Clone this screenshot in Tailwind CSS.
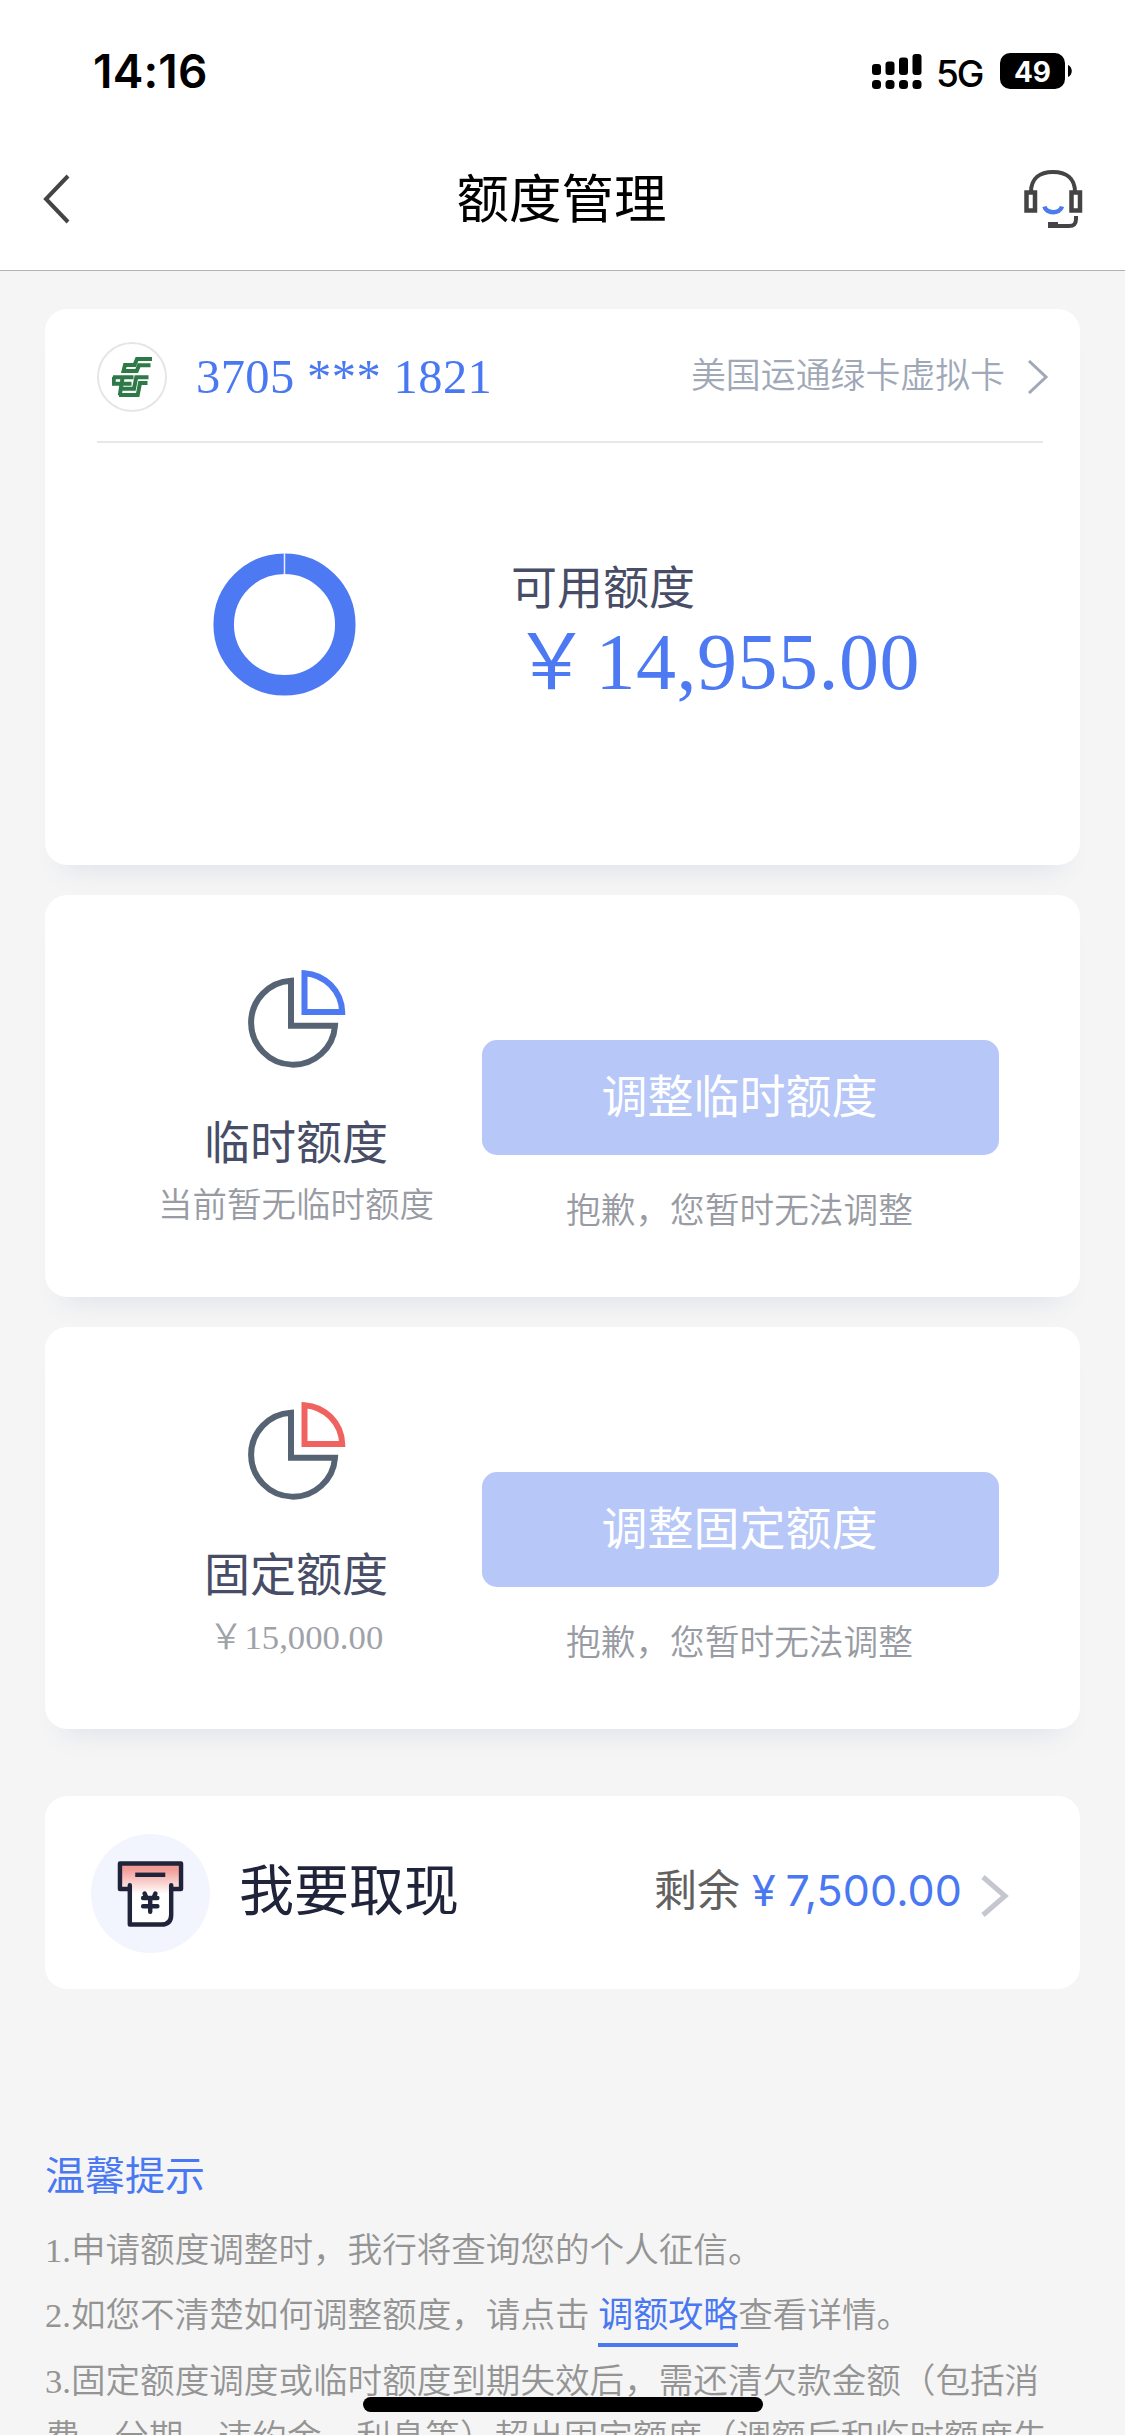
<!DOCTYPE html>
<html lang="zh-CN">
<head>
<meta charset="utf-8">
<title>额度管理</title>
<script src="https://cdn.jsdelivr.net/npm/@tailwindcss/browser@4"></script>
</head>
<body class="bg-[#f5f5f5]">
<div class="relative flex h-[2435px] w-[1125px] flex-col overflow-hidden bg-[#f5f5f5] font-['Liberation_Serif','Noto_Sans_CJK_SC',sans-serif]">
  <header class="flex h-[271px] shrink-0 flex-col border-b border-[#b2b2b2] bg-white font-['Inter','Noto_Sans_CJK_SC',sans-serif]">
    <div class="flex h-[142px] items-center justify-between pl-[93px] pr-[53px] text-black">
      <div class="text-[46px] leading-none font-semibold tracking-[0.2px]">14:16</div>
      <div class="flex items-center">
        <svg class="block" width="50" height="36" viewBox="0 0 50 36" fill="#000">
          <rect x="0" y="11" width="9" height="11" rx="3"/><rect x="13.5" y="8.500" width="9" height="13.500" rx="3"/><rect x="27" y="4.500" width="9" height="17.500" rx="3"/><rect x="40.500" y="1" width="9" height="21" rx="3"/>
          <rect x="0" y="27" width="9" height="9" rx="3.500"/><rect x="13.500" y="27" width="9" height="9" rx="3.500"/><rect x="27" y="27" width="9" height="9" rx="3.500"/><rect x="40.500" y="27" width="9" height="9" rx="3.500"/>
        </svg>
        <div class="ml-[14px] w-[64px] pt-1 text-[37px] leading-none font-medium tracking-[-2px]">5G</div>
        <div class="flex h-[36px] w-[65px] items-center justify-center rounded-[10px] bg-black pt-px text-[28px] leading-none font-bold text-white">49</div>
        <svg class="ml-[3px] block" width="4" height="12" viewBox="0 0 4 12"><path d="M0 0C5 2 5 10 0 12Z" fill="#000"/></svg>
      </div>
    </div>
    <div class="flex flex-1 items-start justify-between pl-[42px] pr-[42px] pt-[25px]">
      <svg class="mt-[7px] block" width="58" height="50" viewBox="0 0 58 50" fill="none"><path d="M26 2L4 25L26 48" stroke="#444" stroke-width="4"/></svg>
      <h1 class="text-[52.500px] leading-[64px] text-black">额度管理</h1>
      <svg class="mt-[2px] block" width="60" height="60" viewBox="0 0 60 60" fill="none" stroke="#444" stroke-width="4">
        <path d="M8 23C8 9 17 3 30 3C43 3 52 9 52 23"/>
        <path d="M3.500 23.500H12V41.500H3.500ZM48.500 23.500H57V41.500H48.500Z" stroke-width="4.500"/>
        <path d="M21.500 37.500C23 45 37 45 39 37.500" stroke="#4b7bec" stroke-width="4.500"/>
        <path d="M53 47V50C53 55 51 57 46 57H25" /><path d="M25 56H35" stroke-width="6"/>
      </svg>
    </div>
  </header>

  <main class="flex flex-col px-[45px] pt-[38px]">
    <section class="flex h-[556px] flex-col rounded-[22px] bg-white shadow-[0_22px_26px_-18px_rgba(80,100,170,0.13)]">
      <div class="ml-[52px] mr-[37px] flex h-[134px] items-center border-b-2 border-[#e8e8e8] pt-[3px]">
        <div class="flex size-[70px] items-center justify-center rounded-full border-2 border-[#e6e6e6]">
          <svg class="block" width="41" height="40" viewBox="0 0 41 40" fill="none" stroke="#2d7a48" stroke-width="4">
            <path d="M40 2H25L22.500 8H13L11.500 14H24.700L27 8.300H38.500"/>
            <path d="M1 20.200H21.500M0 26.700H19.500M2 20L1.500 27M10.500 19L9.800 28"/>
            <path d="M36.500 20.200H24.300L22 31.700H9M35.500 26H28L25.700 38H7M9.500 27L7.800 38.500"/>
          </svg>
        </div>
        <div class="ml-[29px] flex-1 text-[48.500px] leading-[64px] tracking-[0.4px] text-[#4a78f2]">3705 *** 1821</div>
        <div class="text-[34.900px] leading-[50px] font-[350] text-[#a0a8b8]">美国运通绿卡虚拟卡</div>
        <svg class="-mr-[6px] ml-[22px] block" width="22" height="34" viewBox="0 0 22 34" fill="none"><path d="M2 1L19 17L2 33" stroke="#a0a8b8" stroke-width="3"/></svg>
      </div>
      <div class="flex items-start pl-[168px] pt-[110px]">
        <svg class="block" width="143" height="143" viewBox="0 0 143 143" fill="none"><circle cx="71.500" cy="71.500" r="60.800" stroke="#4d79f2" stroke-width="20.500"/><path d="M71.500 0V22" stroke="#e8eefc" stroke-width="1.500"/></svg>
        <div class="ml-[155px] flex flex-col pt-[4px]">
          <div class="text-[46px] leading-[64px] text-[#474d66]">可用额度</div>
          <div class="text-[80px] leading-[70px] tracking-[0.500px] text-[#4d79f2]"><span class="mr-[5px] ml-[2px] font-['Noto_Sans_CJK_SC'] text-[77px]">￥</span>14,955.00</div>
        </div>
      </div>
    </section>

    <section class="mt-[30px] flex h-[402px] rounded-[22px] bg-white shadow-[0_22px_26px_-18px_rgba(80,100,170,0.13)]">
      <div class="ml-[101px] flex w-[300px] flex-col items-center pt-[74px]">
        <svg class="block" width="101" height="100" viewBox="0 0 101 100" fill="none" stroke-width="6"><path d="M45 11.700V56.700H89A42 42 0 1 1 45 11.700Z" stroke="#566373"/><path d="M58.500 4.200V43H96.200C95.500 22 79 5.500 58.500 4.200Z" stroke="#4d79f2"/></svg>
        <div class="mt-[43px] text-[46px] leading-[64px] text-[#474d66]">临时额度</div>
        <div class="-mt-px text-[34.500px] leading-[60px] font-[350] text-[#989ba3]">当前暂无临时额度</div>
      </div>
      <div class="ml-[36px] flex w-[517px] flex-col items-center pt-[145px]">
        <button class="h-[115px] w-full rounded-[15px] bg-[#b6c7f8] pr-[2px] text-[46px] leading-[64px] text-white">调整临时额度</button>
        <div class="mt-[32px] pr-[2px] text-[34.700px] leading-[50px] font-[350] text-[#989ba3]">抱歉，您暂时无法调整</div>
      </div>
    </section>

    <section class="mt-[30px] flex h-[402px] rounded-[22px] bg-white shadow-[0_22px_26px_-18px_rgba(80,100,170,0.13)]">
      <div class="ml-[101px] flex w-[300px] flex-col items-center pt-[74px]">
        <svg class="block" width="101" height="100" viewBox="0 0 101 100" fill="none" stroke-width="6"><path d="M45 11.700V56.700H89A42 42 0 1 1 45 11.700Z" stroke="#566373"/><path d="M58.500 4.200V43H96.200C95.500 22 79 5.500 58.500 4.200Z" stroke="#f0625f"/></svg>
        <div class="mt-[43px] text-[46px] leading-[64px] text-[#474d66]">固定额度</div>
        <div class="-mt-[4px] text-[34.700px] leading-[60px] text-[#9fa2a9]"><span class="mr-px font-['Noto_Sans_CJK_SC'] font-[350]">￥</span>15,000.00</div>
      </div>
      <div class="ml-[36px] flex w-[517px] flex-col items-center pt-[145px]">
        <button class="h-[115px] w-full rounded-[15px] bg-[#b6c7f8] pr-[2px] text-[46px] leading-[64px] text-white">调整固定额度</button>
        <div class="mt-[32px] pr-[2px] text-[34.700px] leading-[50px] font-[350] text-[#989ba3]">抱歉，您暂时无法调整</div>
      </div>
    </section>

    <section class="mt-[67px] flex h-[193px] items-center rounded-[22px] bg-white pl-[46px] pr-[70px]">
      <div class="mt-[2px] flex size-[119px] items-center justify-center rounded-full bg-[#f2f5fe]">
        <svg class="mr-px block" width="67" height="68" viewBox="0 0 68 68" fill="none" stroke="#20243a" stroke-width="4.500" stroke-linejoin="round" stroke-linecap="round">
          <defs><linearGradient id="slot" x1="0" y1="0" x2="0" y2="1"><stop offset="0.100" stop-color="#f29c97"/><stop offset="0.500" stop-color="#fff"/><stop offset="1" stop-color="#fff"/></linearGradient></defs>
          <path d="M3 3H65V29H55V55Q55 65 45 65H13V29H3Z" fill="url(#slot)" stroke="none"/>
          <path d="M12 29H3V3H65V29H56"/><path d="M13 25V65H45Q55 65 55 55V25"/>
          <path d="M18.500 14.500H49" stroke-linecap="butt"/>
          <path d="M28 33.500L30 38M39 33.500L37 38M26.500 38H41M26.500 46.500H41M33.700 39V52"/>
        </svg>
      </div>
      <div class="-mt-[14px] ml-[29px] flex-1 font-['Noto_Sans_CJK_SC'] text-[55px] leading-[80px] text-[#20243a]">我要取现</div>
      <div class="flex items-center font-['Inter','Noto_Sans_CJK_SC',sans-serif] text-[43px] leading-[60px]">
        <span class="-mt-[6px] text-[#616161]">剩余</span>
        <span class="-mt-[6px] ml-[12px] text-[#4a78f2]">¥</span>
        <span class="-mt-[6px] ml-[10px] tracking-[0.1px] text-[#4a78f2]">7,500.00</span>
        <svg class="ml-[18px] mt-[6px] block" width="30" height="44" viewBox="0 0 30 44" fill="none"><path d="M3 3L25 22L3 41" stroke="#c4c7d0" stroke-width="5"/></svg>
      </div>
    </section>

    <section class="mt-[156px] flex w-[1035px] flex-col text-[34.600px] font-[350] text-[#949494]">
      <h2 class="text-[40px] leading-[64px] font-normal text-[#4a78f2]">温馨提示</h2>
      <p class="mt-[14px] h-[55px] leading-[55px]">1.申请额度调整时，我行将查询您的个人征信。</p>
      <p class="mt-[10px] flex h-[55px] leading-[55px] whitespace-pre">2.如您不清楚如何调整额度，请点击 <a class="h-[59px] shrink-0 border-b-4 border-[#4a78f2] text-[35px] font-normal text-[#4a78f2]">调额攻略</a>查看详情。</p>
      <p class="mt-[11px] leading-[55.500px] whitespace-nowrap">3.固定额度调度或临时额度到期失效后，需还清欠款金额（包括消<br>费、分期、违约金、利息等）超出固定额度（调额后和临时额度失</p>
    </section>
  </main>
  <div class="absolute left-[363px] top-[2397px] h-[15px] w-[400px] rounded-full bg-black"></div>
</div>
</body>
</html>
